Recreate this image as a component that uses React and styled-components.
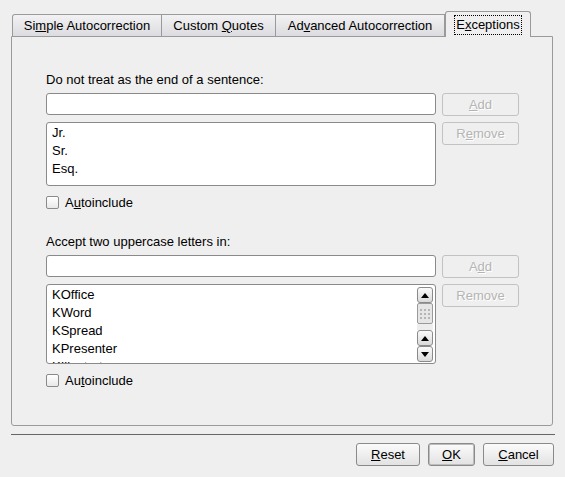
import styled, { createGlobalStyle } from "styled-components";

const Global = createGlobalStyle`
  html, body {
    margin: 0;
    padding: 0;
    background: #efefef;
  }
  body {
    font-family: "Liberation Sans", Arial, sans-serif;
    font-size: 13px;
    color: #000;
  }
`;

const Dialog = styled.div`
  width: 565px;
  height: 477px;
  display: flex;
  flex-direction: column;
  box-sizing: border-box;
  padding-top: 11px;
`;

const TabBar = styled.div`
  display: flex;
  align-items: flex-end;
  margin-left: 12px;
  height: 25px;
  position: relative;
  z-index: 1;
`;

const Tab = styled.div`
  box-sizing: border-box;
  width: ${(p) => p.$w}px;
  height: ${(p) => (p.$active ? 26 : 22)}px;
  margin-bottom: ${(p) => (p.$active ? -1 : 0)}px;
  display: flex;
  align-items: ${(p) => (p.$active ? "flex-start" : "center")};
  justify-content: center;
  padding-top: ${(p) => (p.$active ? 4 : 0)}px;
  border: 1px solid #9a9a9a;
  border-left-width: ${(p) => (p.$first || p.$active ? 1 : 0)}px;
  border-bottom: none;
  border-radius: ${(p) => (p.$first ? "3px 0 0 0" : p.$active ? "3px 3px 0 0" : "0")};
  background: ${(p) =>
    p.$active ? "#efefef" : "linear-gradient(#f2f2f4, #dcdce0)"};
  white-space: nowrap;
`;

const FocusLabel = styled.span`
  outline: 1px dotted #000;
  padding: 1px 1px 2px 1px;
  line-height: 15px;
`;

const Panel = styled.div`
  box-sizing: border-box;
  margin: 0 12px 0 11px;
  height: 390px;
  border: 1px solid #9a9a9a;
  border-radius: 0 0 3px 3px;
  padding: 35px 34px 0 34px;
  display: flex;
  flex-direction: column;
`;

const Label = styled.div`
  line-height: 15px;
  margin-top: ${(p) => p.$mt || 0}px;
  margin-bottom: 6px;
`;

const Grid = styled.div`
  display: grid;
  grid-template-columns: 390px 77px;
  column-gap: 6px;
  row-gap: 6px;
  align-items: start;
`;

const TextInput = styled.div`
  box-sizing: border-box;
  height: 22px;
  background: #fff;
  border: 1px solid #8a8a8a;
  border-radius: 3px;
`;

const ListBox = styled.div`
  box-sizing: border-box;
  height: ${(p) => p.$h}px;
  background: #fff;
  border: 1px solid #8a8a8a;
  border-radius: 3px;
  padding: 1px 4px;
  display: flex;
  justify-content: space-between;
  overflow: hidden;
  position: relative;
`;

const Items = styled.div`
  line-height: 18px;
  padding-left: 1px;
`;

const SideButton = styled.div`
  box-sizing: border-box;
  height: 23px;
  border: 1px solid #c2c2c2;
  border-radius: 3px;
  display: flex;
  align-items: center;
  justify-content: center;
  color: #b4b4b4;
  text-shadow: 1px 1px 0 #fff;
  background: #efefef;
`;

const CheckRow = styled.div`
  display: flex;
  align-items: center;
  gap: 6px;
  margin-top: 9px;
  line-height: 15px;
`;

const CheckBox = styled.span`
  box-sizing: border-box;
  width: 13px;
  height: 13px;
  border: 1px solid #8a8a8a;
  border-radius: 2px;
  background: linear-gradient(#ffffff, #e8e8e8);
`;

const Scrollbar = styled.div`
  position: absolute;
  top: 2px;
  right: 2px;
  bottom: 1px;
  width: 16px;
  display: flex;
  flex-direction: column;
`;

const ScrollBtn = styled.div`
  box-sizing: border-box;
  height: 16px;
  border: 1px solid #8a8a8a;
  border-radius: 3px;
  background: linear-gradient(#fafafa, #dadada);
  display: flex;
  align-items: center;
  justify-content: center;
`;

const Grip = styled.div`
  box-sizing: border-box;
  height: 21px;
  border: 1px solid #9a9a9a;
  border-radius: 2px;
  background: #e6e6e6;
  display: flex;
  align-items: center;
  justify-content: center;
`;

const Track = styled.div`
  flex: 1;
  background-image: radial-gradient(#d8d8d8 0.6px, transparent 0.8px);
  background-size: 2px 2px;
`;

const Separator = styled.div`
  margin: 8px 10px 0 11px;
  height: 1px;
  background: #666;
`;

const Footer = styled.div`
  display: flex;
  justify-content: flex-end;
  gap: 8px;
  padding: 8px 11px 0 0;
`;

const Button = styled.div`
  box-sizing: border-box;
  width: ${(p) => p.$w}px;
  height: 23px;
  border: 1px solid #8a8a8a;
  border-radius: 3px;
  background: linear-gradient(#fbfbfb, #e2e2e2);
  display: flex;
  align-items: center;
  justify-content: center;
  box-shadow: ${(p) => (p.$default ? "inset 0 0 0 1px #bdbdbd" : "none")};
`;

const Arrow = ({ down }) => (
  <svg width="8" height="5" viewBox="0 0 8 5">
    <path d={down ? "M0 0h8L4 5z" : "M0 5h8L4 0z"} fill="#000" />
  </svg>
);

const GripDots = () => (
  <svg width="10" height="10" viewBox="0 0 10 10">
    {[0, 4, 8].map((y) =>
      [0, 4, 8].map((x) => (
        <rect key={`${x}-${y}`} x={x} y={y} width="2" height="2" fill="#b5b5b5" />
      ))
    )}
  </svg>
);

export default function App() {
  return (
    <>
      <Global />
      <Dialog>
        <TabBar>
          <Tab $w={150} $first>
            <span>
              Si<u>m</u>ple Autocorrection
            </span>
          </Tab>
          <Tab $w={114}>
            <span>
              Custom <u>Q</u>uotes
            </span>
          </Tab>
          <Tab $w={169}>
            <span>
              Ad<u>v</u>anced Autocorrection
            </span>
          </Tab>
          <Tab $w={86} $active>
            <FocusLabel>
              E<u>x</u>ceptions
            </FocusLabel>
          </Tab>
        </TabBar>
        <Panel>
          <Label>Do not treat as the end of a sentence:</Label>
          <Grid>
            <TextInput />
            <SideButton>
              <span>
                <u>A</u>dd
              </span>
            </SideButton>
            <ListBox $h={64}>
              <Items>
                <div>Jr.</div>
                <div>Sr.</div>
                <div>Esq.</div>
              </Items>
            </ListBox>
            <SideButton>
              <span>
                R<u>e</u>move
              </span>
            </SideButton>
          </Grid>
          <CheckRow>
            <CheckBox />
            <span>
              A<u>u</u>toinclude
            </span>
          </CheckRow>

          <Label $mt={24}>Accept two uppercase letters in:</Label>
          <Grid>
            <TextInput />
            <SideButton>
              <span>
                A<u>d</u>d
              </span>
            </SideButton>
            <ListBox $h={80}>
              <Items>
                <div>KOffice</div>
                <div>KWord</div>
                <div>KSpread</div>
                <div>KPresenter</div>
                <div>KIllustrator</div>
              </Items>
              <Scrollbar>
                <ScrollBtn>
                  <Arrow />
                </ScrollBtn>
                <Grip>
                  <GripDots />
                </Grip>
                <Track />
                <ScrollBtn>
                  <Arrow />
                </ScrollBtn>
                <ScrollBtn>
                  <Arrow down />
                </ScrollBtn>
              </Scrollbar>
            </ListBox>
            <SideButton>Remove</SideButton>
          </Grid>
          <CheckRow>
            <CheckBox />
            <span>
              Au<u>t</u>oinclude
            </span>
          </CheckRow>
        </Panel>
        <Separator />
        <Footer>
          <Button $w={64}>
            <span>
              <u>R</u>eset
            </span>
          </Button>
          <Button $w={47} $default>
            <span>
              <u>O</u>K
            </span>
          </Button>
          <Button $w={71}>
            <span>
              <u>C</u>ancel
            </span>
          </Button>
        </Footer>
      </Dialog>
    </>
  );
}
